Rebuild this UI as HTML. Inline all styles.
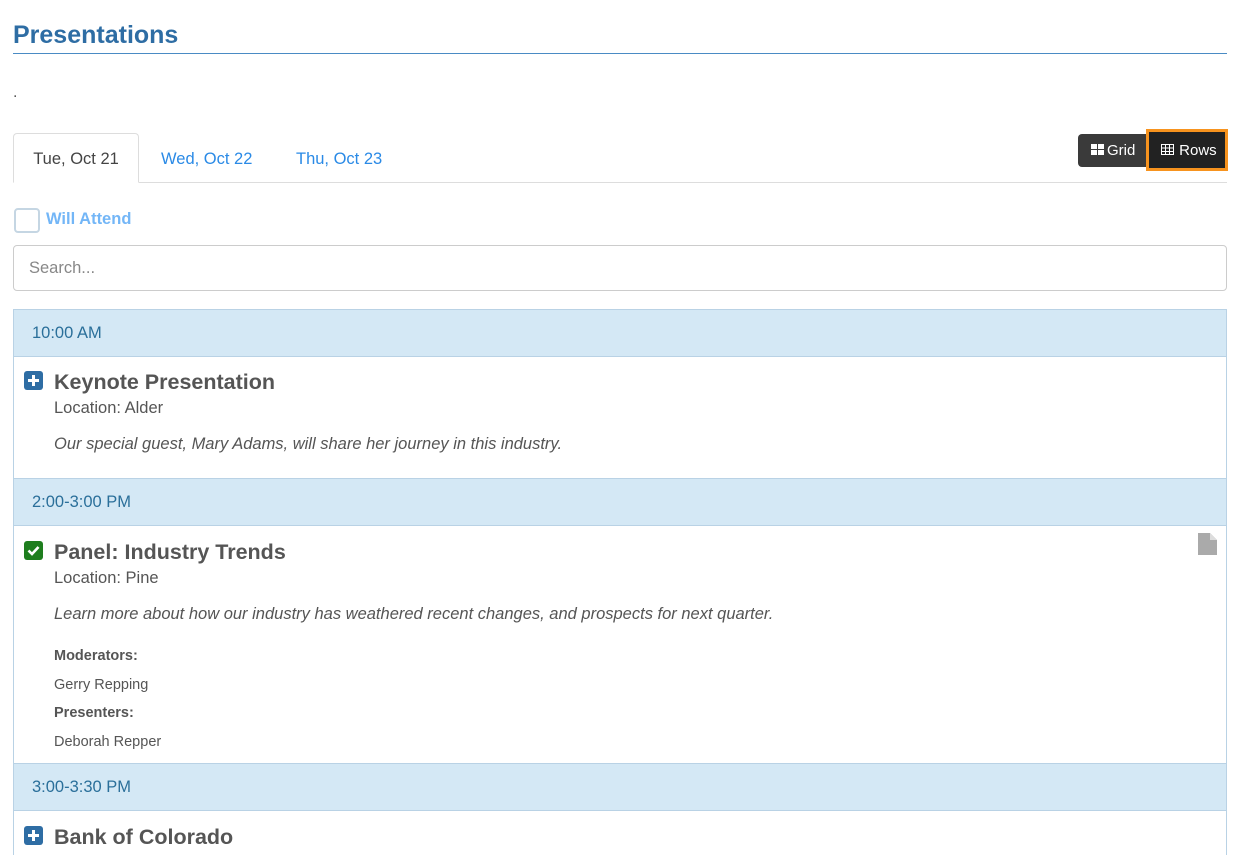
<!DOCTYPE html>
<html><head><meta charset="utf-8"><style>
*{box-sizing:border-box;margin:0;padding:0}
body{width:1243px;height:855px;overflow:hidden;background:#fff;font-family:"Liberation Sans",Arial,sans-serif;color:#555;position:relative}
.a{position:absolute}
h1{position:absolute;left:13px;top:21px;font-size:25px;font-weight:bold;color:#2e6da4}
.rule{left:13px;top:53px;width:1214px;height:1px;background:#4a8bc4}
.tabline{left:13px;top:182px;width:1214px;height:1px;background:#ddd}
.tab{top:134px;height:50px;font-size:16.5px;line-height:50px;color:#2a8ae6}
.active{left:13px;width:126px;top:133px;border:1px solid #ddd;border-bottom:1px solid #fff;border-radius:4px 4px 0 0;background:#fff;color:#444;text-align:center}
.btn{top:134px;height:33px;background:#333;color:#fff;font-size:15px;line-height:33px}
.hdr{left:13px;width:1214px;height:48px;background:#d4e8f5;border:1px solid #b9d2e5;color:#2a6f9a;font-size:16.5px;line-height:47px;padding-left:18px}
.item{left:13px;width:1214px;border-left:1px solid #b9d2e5;border-right:1px solid #b9d2e5;background:#fff}
.t{font-size:21.5px;font-weight:bold;color:#555;left:54px}
.loc{font-size:16.5px;color:#555;left:54px}
.desc{font-size:16.5px;font-style:italic;color:#555;left:54px}
.sm{font-size:14.5px;color:#555;left:54px}
.ic{left:24px;width:19px;height:19px;border-radius:3px}
</style></head><body>
<h1>Presentations</h1>
<div class="a rule"></div>
<div class="a" style="left:13px;top:84px;font-size:16px">.</div>
<div class="a tabline"></div>
<div class="a tab active">Tue, Oct 21</div>
<div class="a tab" style="left:161px">Wed, Oct 22</div>
<div class="a tab" style="left:296px">Thu, Oct 23</div>
<div class="a btn" style="left:1078px;width:70px;border-radius:4px 0 0 4px;background:#3a3a3a;padding-left:13px">
<svg width="14" height="12" style="vertical-align:-1px;margin-right:2px"><rect x="0" y="0" width="6" height="5" fill="#fff"/><rect x="7" y="0" width="6" height="5" fill="#fff"/><rect x="0" y="6" width="6" height="5" fill="#fff"/><rect x="7" y="6" width="6" height="5" fill="#fff"/></svg>Grid</div>
<div class="a btn" style="left:1146px;width:82px;top:129px;height:42px;line-height:37px;border:3px solid #f7931e;background:#222;padding-left:12px">
<svg width="14" height="12" style="vertical-align:-1px"><rect x="0.5" y="0.5" width="12" height="10" fill="none" stroke="#fff"/><path d="M0 4h13M0 7.5h13M4.5 0v11M8.5 0v11" stroke="#fff"/></svg> Rows</div>
<div class="a" style="left:14px;top:208px;width:26px;height:25px;border:2px solid #c5d6e3;border-radius:4px"></div>
<div class="a" style="left:46px;top:210px;font-size:16.5px;font-weight:bold;color:#73b6f7">Will Attend</div>
<div class="a" style="left:13px;top:245px;width:1214px;height:46px;border:1px solid #ccc;border-radius:4px;font-size:16.5px;color:#888;line-height:45px;padding-left:15px">Search...</div>

<div class="a hdr" style="top:309px">10:00 AM</div>
<div class="a item" style="top:357px;height:121px"></div>
<div class="a ic" style="top:371px;background:#2e6da4"><svg width="19" height="19"><path d="M9.5 4v11M4 9.5h11" stroke="#fff" stroke-width="3"/></svg></div>
<div class="a t" style="top:370px">Keynote Presentation</div>
<div class="a loc" style="top:399px">Location: Alder</div>
<div class="a desc" style="top:435px">Our special guest, Mary Adams, will share her journey in this industry.</div>

<div class="a hdr" style="top:478px">2:00-3:00 PM</div>
<div class="a item" style="top:526px;height:237px"></div>
<div class="a ic" style="top:541px;background:#1e7e1e"><svg width="19" height="19"><path d="M4.5 9.5l3.5 3.5 6.5-7" stroke="#fff" stroke-width="2.6" fill="none"/></svg></div>
<svg class="a" style="left:1198px;top:533px" width="19" height="22"><path d="M0 0h12l7 7v15H0z" fill="#aaa"/><path d="M12 0v7h7" fill="#ddd"/></svg>
<div class="a t" style="top:540px">Panel: Industry Trends</div>
<div class="a loc" style="top:569px">Location: Pine</div>
<div class="a desc" style="top:605px">Learn more about how our industry has weathered recent changes, and prospects for next quarter.</div>
<div class="a sm" style="top:648px;font-weight:bold">Moderators:</div>
<div class="a sm" style="top:677px">Gerry Repping</div>
<div class="a sm" style="top:705px;font-weight:bold">Presenters:</div>
<div class="a sm" style="top:734px">Deborah Repper</div>

<div class="a hdr" style="top:763px">3:00-3:30 PM</div>
<div class="a item" style="top:811px;height:44px"></div>
<div class="a ic" style="top:826px;background:#2e6da4"><svg width="19" height="19"><path d="M9.5 4v11M4 9.5h11" stroke="#fff" stroke-width="3"/></svg></div>
<div class="a t" style="top:825px">Bank of Colorado</div>
</body></html>
